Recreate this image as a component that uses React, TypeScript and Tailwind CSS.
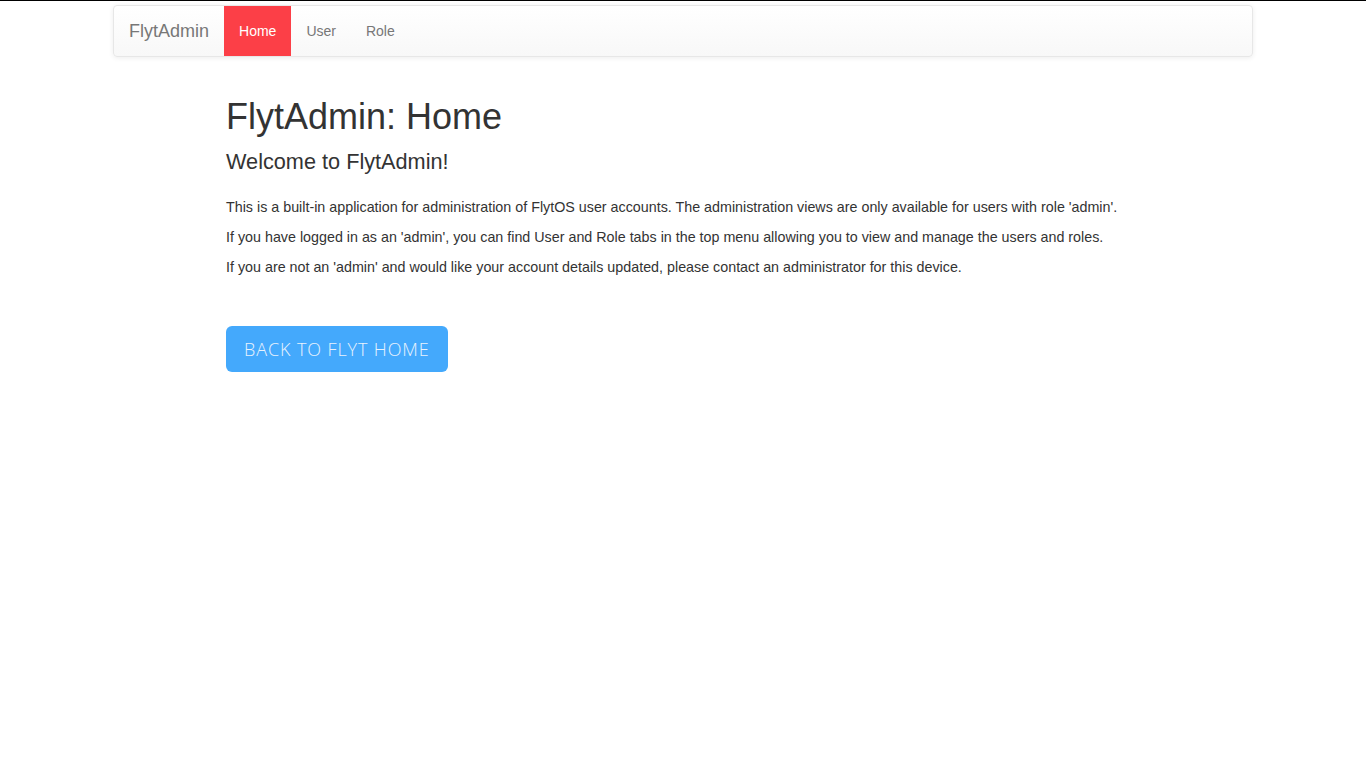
const PARAGRAPHS = [
  "This is a built-in application for administration of FlytOS user accounts. The administration views are only available for users with role 'admin'.",
  "If you have logged in as an 'admin', you can find User and Role tabs in the top menu allowing you to view and manage the users and roles.",
  "If you are not an 'admin' and would like your account details updated, please contact an administrator for this device.",
];

const NAV = ["Home", "User", "Role"];

export default function App() {
  return (
    <div className="min-h-screen bg-white font-['Liberation_Sans',Arial,sans-serif] text-[#333]">
      <div className="h-px bg-black" />
      <div className="mx-auto w-[1140px] pt-1">
        <nav className="flex h-[52px] items-stretch rounded border border-[#e7e7e7] bg-gradient-to-b from-white to-[#f8f8f8] shadow-[0_1px_5px_rgba(0,0,0,0.075)]">
          <span className="flex items-center px-[15px] text-[18px] text-[#777]">FlytAdmin</span>
          <ul className="flex items-stretch">
            {NAV.map((item, i) => (
              <li
                key={item}
                className={
                  i === 0
                    ? "flex items-center bg-[#fc3f47] px-[15px] text-[14px] text-white"
                    : "flex items-center px-[15px] text-[14px] text-[#777]"
                }
              >
                {item}
              </li>
            ))}
          </ul>
        </nav>
      </div>

      <main className="mx-auto w-[940px] pt-[40px] pl-[13px]">
        <h1 className="text-[36px] leading-[1.1] font-normal">FlytAdmin: Home</h1>
        <h3 className="mt-[13px] text-[21.7px] leading-[1.1] font-normal">Welcome to FlytAdmin!</h3>
        <div className="mt-[24px]">
          {PARAGRAPHS.map((p, i) => (
            <p key={i} className="mb-[10px] text-[14.3px] leading-[20px]">
              {p}
            </p>
          ))}
        </div>
        <button className="mt-[39px] h-[46px] rounded-md bg-[#44a9fc] px-[18px] font-['Open_Sans',sans-serif] text-[18px] font-light tracking-[0.05em] text-[#e8f2fc] uppercase">
          Back to Flyt Home
        </button>
      </main>
    </div>
  );
}
